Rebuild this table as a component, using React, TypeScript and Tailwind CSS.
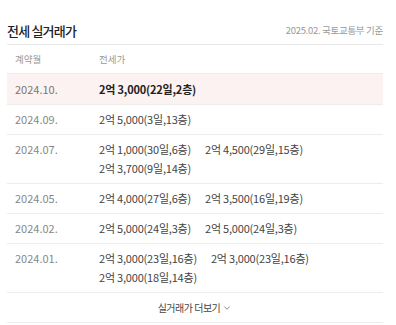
import { ChevronDown } from 'lucide-react';

interface Deal {
  month: string;
  prices: string[];
  highlight?: boolean;
}

const deals: Deal[] = [
  { month: '2024.10.', prices: ['2억 3,000(22일,2층)'], highlight: true },
  { month: '2024.09.', prices: ['2억 5,000(3일,13층)'] },
  { month: '2024.07.', prices: ['2억 1,000(30일,6층)', '2억 4,500(29일,15층)', '2억 3,700(9일,14층)'] },
  { month: '2024.05.', prices: ['2억 4,000(27일,6층)', '2억 3,500(16일,19층)'] },
  { month: '2024.02.', prices: ['2억 5,000(24일,3층)', '2억 5,000(24일,3층)'] },
  { month: '2024.01.', prices: ['2억 3,000(23일,16층)', '2억 3,000(23일,16층)', '2억 3,000(18일,14층)'] },
];

export default function App() {
  return (
    <div
      className="w-[396px] h-[325px] bg-white px-[7px] pt-[17px]"
      style={{ fontFamily: '"Noto Sans CJK KR", "Noto Sans", sans-serif' }}
    >
      <div className="flex items-center justify-between h-[28px] border-b border-[#e8e8e8] mr-[6px]">
        <h2 className="text-[13px] font-medium text-[#222] tracking-[-0.8px]">전세 실거래가</h2>
        <span className="text-[9.5px] text-[#999] tracking-[-0.3px]">2025.02. 국토교통부 기준</span>
      </div>

      <div className="mr-[6px]">
        <div className="flex items-center h-[29px] border-b border-[#ececec] text-[9.5px] text-[#999]">
          <span className="w-[92px] pl-[8px]">계약월</span>
          <span>전세가</span>
        </div>

        {deals.map((d) => (
          <div
            key={d.month}
            className={`flex pb-[5px] border-b border-[#ececec] text-[11px] leading-[19px] ${
              d.highlight ? 'bg-[#fdf2f2] pt-[6px]' : 'pt-[5px]'
            }`}
          >
            <span className={`w-[92px] shrink-0 pl-[8px] ${d.highlight ? 'text-[#777]' : 'text-[#888]'}`}>
              {d.month}
            </span>
            <div className="flex flex-wrap gap-x-[14px] flex-1 tracking-[-0.2px]">
              {d.prices.map((p, i) => (
                <span
                  key={i}
                  className={d.highlight ? 'font-bold text-[#222]' : 'text-[#444]'}
                >
                  {p}
                </span>
              ))}
            </div>
          </div>
        ))}

        <div className="flex items-center justify-center h-[30px] border-b border-[#ececec] text-[10px] text-[#444] tracking-[-0.5px]">
          실거래가 더보기
          <ChevronDown size={10} strokeWidth={1.5} className="ml-[2px]" />
        </div>
      </div>
    </div>
  );
}
